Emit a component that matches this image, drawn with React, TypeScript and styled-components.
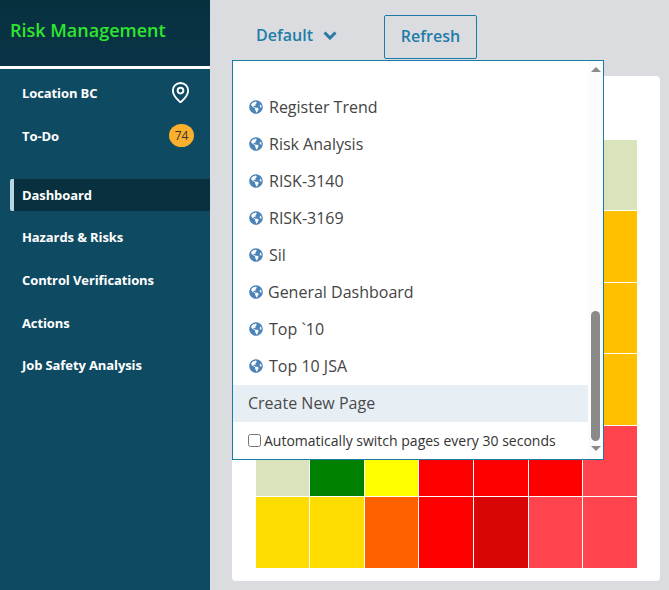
import styled, { createGlobalStyle } from "styled-components";
import { FaGlobeAmericas } from "react-icons/fa";
import { MapPin } from "lucide-react";

const GlobalStyle = createGlobalStyle`
  html, body {
    margin: 0;
    padding: 0;
  }
  body {
    font-family: "Open Sans", "Liberation Sans", sans-serif;
    background: #dbdcdf;
  }
  * {
    box-sizing: border-box;
  }
`;

const Page = styled.div`
  display: grid;
  grid-template-columns: 210px 1fr;
  width: 669px;
  height: 590px;
  overflow: hidden;
`;

const Sidebar = styled.nav`
  display: flex;
  flex-direction: column;
  background: #0f4a63;
`;

const Brand = styled.div`
  display: flex;
  align-items: center;
  height: 69px;
  padding: 0 10px 7px;
  background: linear-gradient(#07303f, #0a3346);
  border-bottom: 3px solid #fff;
  color: #2ee62e;
  font-size: 18px;
  font-weight: 600;
`;

const UtilityList = styled.div`
  display: flex;
  flex-direction: column;
  padding: 2px 16px 22px 22px;
`;

const UtilityRow = styled.div`
  display: flex;
  align-items: center;
  justify-content: space-between;
  height: 43px;
  color: #fff;
  font-size: 13px;
  font-weight: 700;
  letter-spacing: -0.1px;
`;

const PinIcon = styled(MapPin)`
  margin-right: 2px;
`;

const CountBadge = styled.span`
  display: flex;
  align-items: center;
  justify-content: center;
  width: 25px;
  height: 23px;
  border-radius: 50%;
  background: #fbb02d;
  color: #333;
  font-size: 12px;
  font-weight: 400;
`;

const NavList = styled.div`
  display: flex;
  flex-direction: column;
`;

const NavItem = styled.div<{ $active?: boolean }>`
  display: flex;
  align-items: center;
  height: ${(p) => (p.$active ? "32px" : "42.75px")};
  margin-left: 10px;
  margin-bottom: ${(p) => (p.$active ? "4.75px" : "0")};
  padding-left: ${(p) => (p.$active ? "8px" : "12px")};
  background: ${(p) => (p.$active ? "#08303f" : "transparent")};
  border-left: ${(p) => (p.$active ? "4px solid #b7d5e2" : "none")};
  border-radius: ${(p) => (p.$active ? "2px 0 0 2px" : "0")};
  color: #fff;
  font-size: 13px;
  font-weight: 700;
  letter-spacing: -0.1px;
`;

const Main = styled.main`
  position: relative;
  display: flex;
  flex-direction: column;
  padding: 15px 9px 9px 22px;
`;

const Toolbar = styled.div`
  display: flex;
  align-items: flex-start;
  height: 61px;
  padding-left: 24px;
`;

const PageSwitch = styled.div`
  display: flex;
  align-items: center;
  gap: 10px;
  width: 128px;
  height: 40px;
  color: #1f7ca8;
  font-size: 16px;
  font-weight: 600;
`;

const Chevron = styled.svg`
  width: 14px;
  height: 9px;
  fill: none;
  stroke: #2b78a6;
  stroke-width: 3;
`;

const RefreshButton = styled.button`
  width: 93px;
  height: 44px;
  padding: 0 0 2px;
  background: transparent;
  border: 1px solid #1a7ba8;
  border-radius: 2px;
  color: #1f7ca8;
  font-family: inherit;
  font-size: 16px;
  font-weight: 600;
`;

const Card = styled.section`
  display: flex;
  flex: 1;
  padding: 64px 23px 13px 24px;
  background: #fff;
  border-radius: 4px;
`;

const Heatmap = styled.div`
  display: grid;
  flex: 1;
  grid-template-columns: 53px 54px 53px 54px 54px 53px 54px;
  grid-template-rows: 70px 71px 70px 71px 70px 71px;
  gap: 1px;
`;

const HeatCell = styled.div<{ $color: string }>`
  background: ${(p) => p.$color};
`;

const Menu = styled.div`
  position: absolute;
  top: 60px;
  left: 22px;
  display: flex;
  width: 372px;
  height: 400px;
  background: #fff;
  border: 1px solid #1a7ba8;
`;

const MenuBody = styled.div`
  display: flex;
  flex: 1;
  flex-direction: column;
  padding-top: 27px;
`;

const MenuItem = styled.div<{ $tight?: boolean }>`
  display: flex;
  align-items: center;
  gap: ${(p) => (p.$tight ? "5px" : "6px")};
  height: 37px;
  padding-left: 16px;
  color: #444;
  font-size: 16px;
`;

const Globe = styled(FaGlobeAmericas)`
  flex: none;
  color: #4c84b8;
  font-size: 14px;
`;

const CreateItem = styled.div`
  display: flex;
  align-items: center;
  height: 37px;
  margin-top: 1px;
  padding: 0 0 1px 15px;
  background: #e7eff5;
  color: #4a4a4a;
  font-size: 16px;
`;

const AutoSwitch = styled.label`
  display: flex;
  align-items: center;
  gap: 3px;
  height: 37px;
  padding-left: 15px;
  color: #333;
  font-size: 14px;
`;

const AutoCheck = styled.input`
  width: 13px;
  height: 13px;
  margin: 0;
`;

const Scrollbar = styled.div`
  display: flex;
  flex: none;
  flex-direction: column;
  align-items: center;
  width: 15px;
  background: #fcfcfc;
`;

const ScrollArrow = styled.span<{ $down?: boolean }>`
  width: 0;
  height: 0;
  margin-top: ${(p) => (p.$down ? "5px" : "6px")};
  border-left: 5px solid transparent;
  border-right: 5px solid transparent;
  border-bottom: ${(p) => (p.$down ? "0" : "5px solid #8a8a8a")};
  border-top: ${(p) => (p.$down ? "5px solid #8a8a8a" : "0")};
`;

const ScrollThumb = styled.div`
  width: 9px;
  height: 130px;
  margin-top: 239px;
  border-radius: 5px;
  background: #8a8a8a;
`;

const pages = ["Register Trend", "Risk Analysis", "RISK-3140", "RISK-3169", "Sil", "General Dashboard", "Top `10", "Top 10 JSA"];

const navItems = ["Hazards & Risks", "Control Verifications", "Actions", "Job Safety Analysis"];

const G = "#d9e4bd";
const A = "#ffc000";
const Y = "#ffdd00";
const R = "#ff0000";
const P = "#ff444d";

// only the rows that aren't hidden by the menu need real colours
const cells = [
  [G, G, G, G, G, G, G],
  [A, A, A, A, A, A, A],
  [A, A, A, A, A, A, A],
  [A, A, A, A, A, A, A],
  [G, "#008000", "#ffff00", R, R, R, P],
  [Y, Y, "#ff6000", R, "#d90606", P, P],
];

export default function App() {
  return (
    <Page>
      <GlobalStyle />
      <Sidebar>
        <Brand>Risk Management</Brand>
        <UtilityList>
          <UtilityRow>
            Location BC
            <PinIcon size={23} strokeWidth={2} color="#fff" />
          </UtilityRow>
          <UtilityRow>
            To-Do
            <CountBadge>74</CountBadge>
          </UtilityRow>
        </UtilityList>
        <NavList>
          <NavItem $active>Dashboard</NavItem>
          {navItems.map((item) => (
            <NavItem key={item}>{item}</NavItem>
          ))}
        </NavList>
      </Sidebar>
      <Main>
        <Toolbar>
          <PageSwitch>
            Default
            <Chevron viewBox="0 0 14 9">
              <polyline points="1.5,1.5 7,7 12.5,1.5" />
            </Chevron>
          </PageSwitch>
          <RefreshButton>Refresh</RefreshButton>
        </Toolbar>
        <Card>
          <Heatmap>
            {cells.flat().map((color, i) => (
              <HeatCell key={i} $color={color} />
            ))}
          </Heatmap>
        </Card>
        <Menu>
          <MenuBody>
            {pages.map((page) => (
              <MenuItem key={page} $tight={page === "General Dashboard"}>
                <Globe />
                {page}
              </MenuItem>
            ))}
            <CreateItem>Create New Page</CreateItem>
            <AutoSwitch>
              <AutoCheck type="checkbox" />
              Automatically switch pages every 30 seconds
            </AutoSwitch>
          </MenuBody>
          <Scrollbar>
            <ScrollArrow />
            <ScrollThumb />
            <ScrollArrow $down />
          </Scrollbar>
        </Menu>
      </Main>
    </Page>
  );
}
